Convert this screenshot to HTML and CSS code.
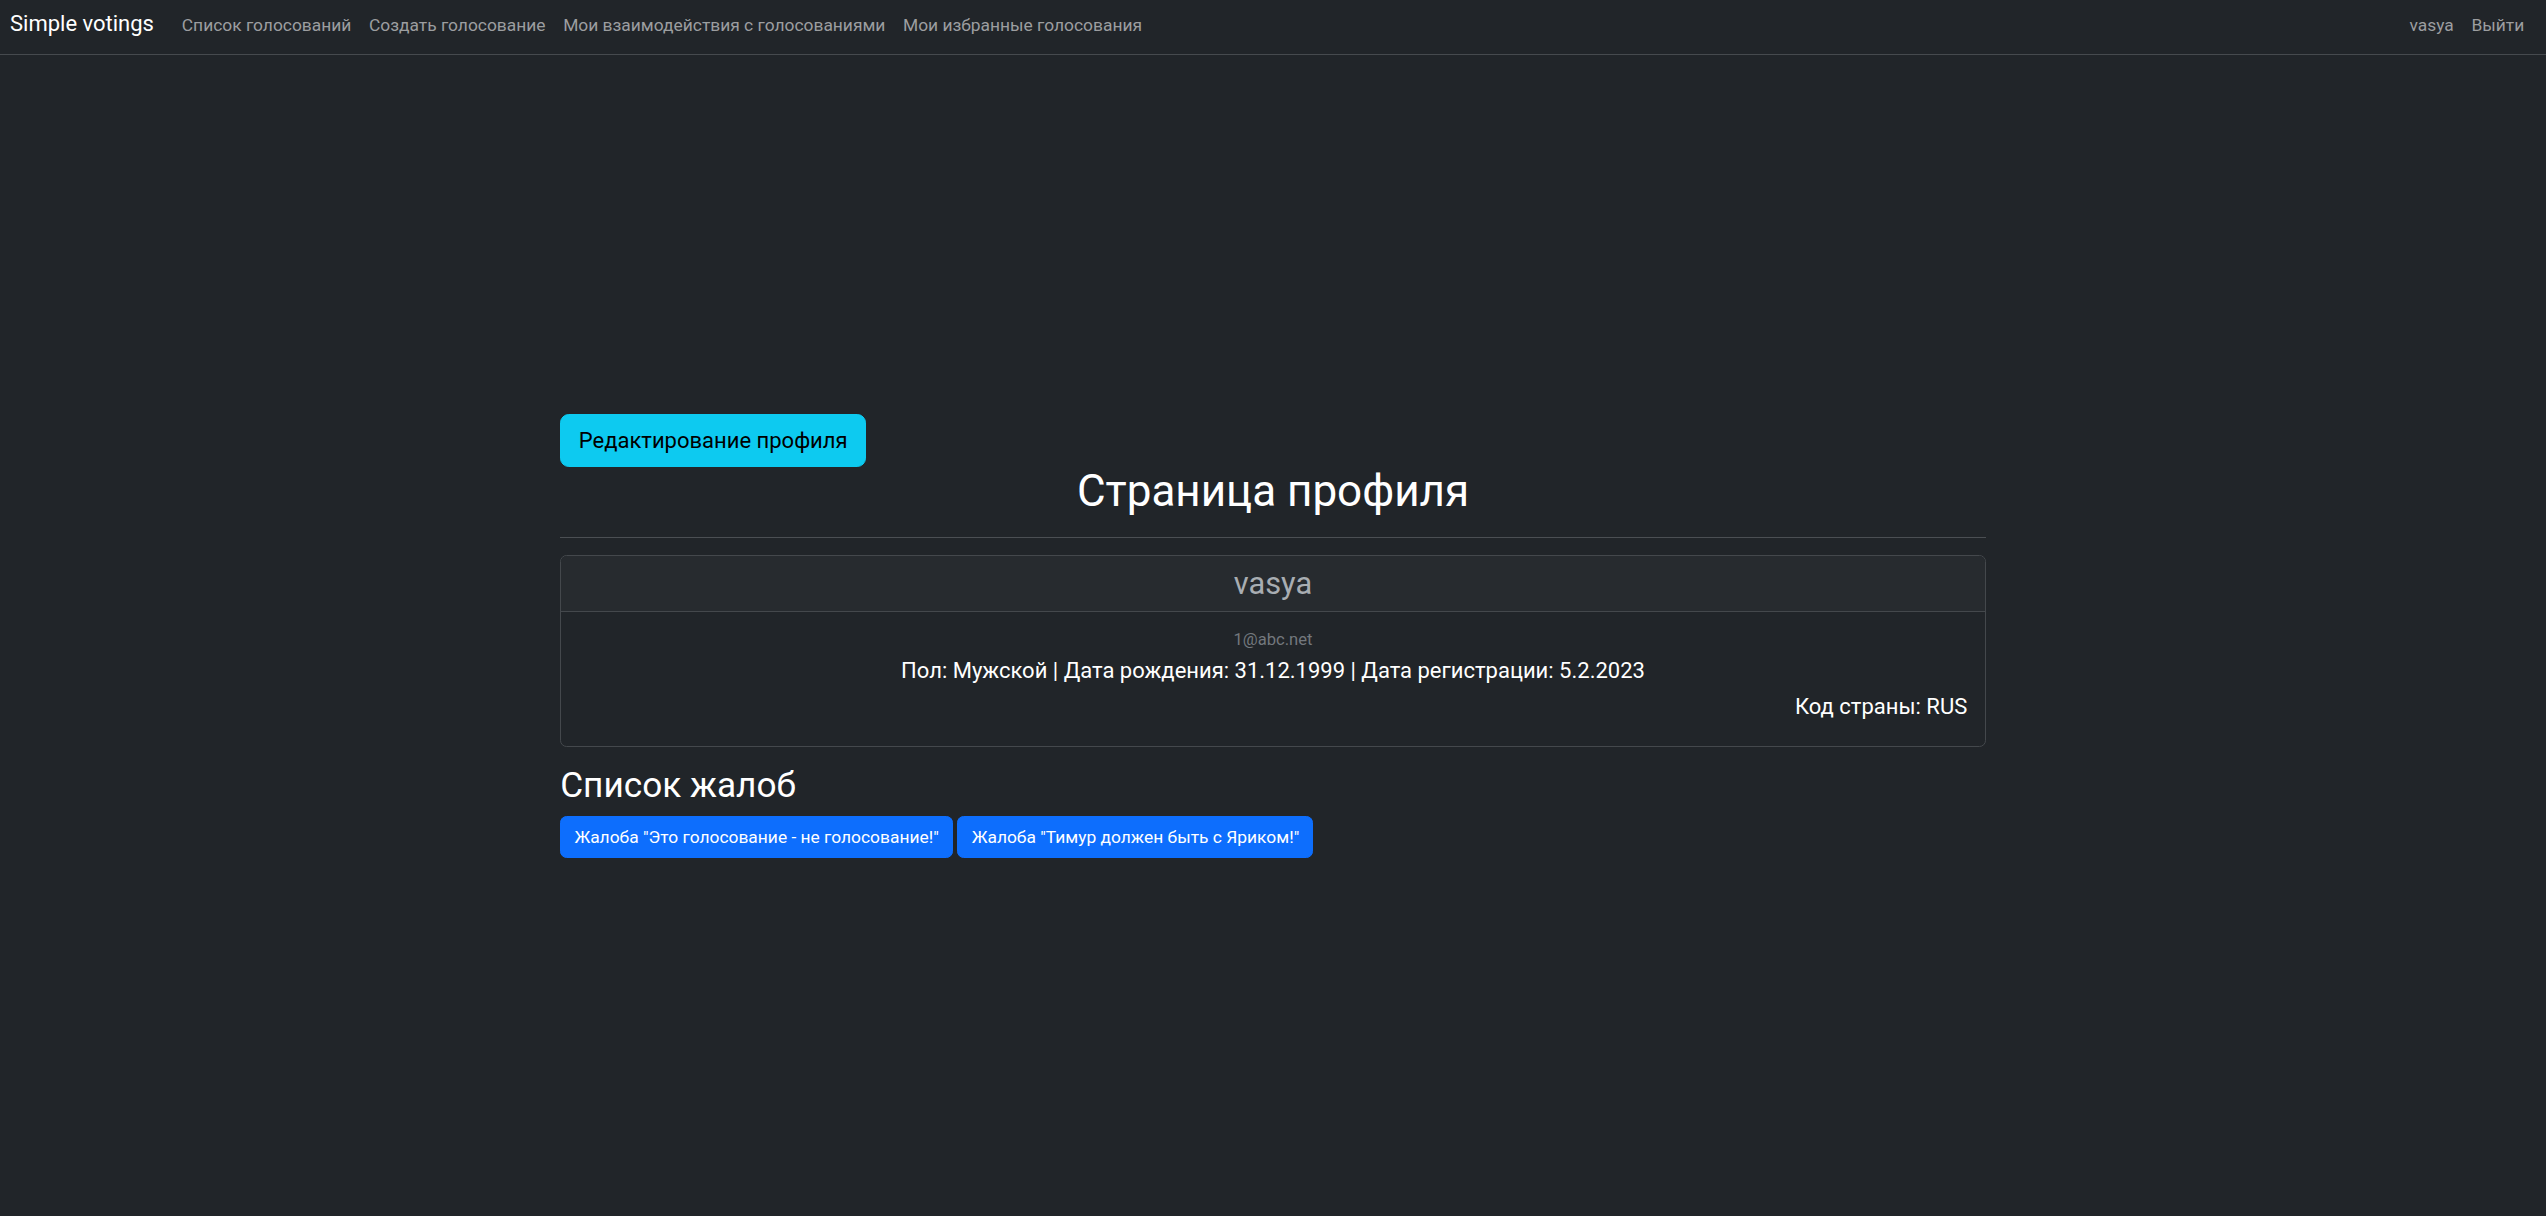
FILE: index.html
```html
<!DOCTYPE html>
<html lang="ru">
<head>
<meta charset="utf-8">
<title>Simple votings</title>
<link rel="stylesheet" href="styles.css">
</head>
<body>
<nav class="navbar">
  <a class="brand" href="#">Simple votings</a>
  <ul class="nav-list">
    <li><a class="nav-link" href="#">Список голосований</a></li>
    <li><a class="nav-link" href="#">Создать голосование</a></li>
    <li><a class="nav-link" href="#">Мои взаимодействия с голосованиями</a></li>
    <li><a class="nav-link" href="#">Мои избранные голосования</a></li>
  </ul>
  <ul class="nav-list nav-right">
    <li><a class="nav-link" href="#">vasya</a></li>
    <li><a class="nav-link" href="#">Выйти</a></li>
  </ul>
</nav>
<main class="container">
  <div class="toolbar"><a class="btn btn-info" href="#">Редактирование профиля</a></div>
  <h1 class="page-title">Страница профиля</h1>
  <hr class="divider">
  <section class="card">
    <div class="card-header"><h3 class="card-name">vasya</h3></div>
    <div class="card-body">
      <div class="email">1@abc.net</div>
      <p class="info center">Пол: Мужской | Дата рождения: 31.12.1999 | Дата регистрации: 5.2.2023</p>
      <p class="info end">Код страны: RUS</p>
    </div>
  </section>
  <h2 class="section-title">Список жалоб</h2>
  <div class="complaints">
    <a class="btn btn-primary" href="#">Жалоба "Это голосование - не голосование!"</a>
    <a class="btn btn-primary" href="#">Жалоба "Тимур должен быть с Яриком!"</a>
  </div>
</main>
</body>
</html>
```
FILE: styles.css
```css
* { box-sizing: border-box; }
html, body { margin: 0; padding: 0; }
body {
  background: #212529;
  color: #f8f9fa;
  font-family: Roboto, "Liberation Sans", sans-serif;
  font-size: 17.6px;
  line-height: 1.5;
  min-height: 1216px;
}
a { text-decoration: none; }

.navbar {
  display: flex;
  align-items: baseline;
  height: 55px;
  padding: 6.7px 13px 0 10px;
  border-bottom: 1px solid #464a4e;
}
.brand {
  color: #ffffff;
  font-size: 22px;
  line-height: 33px;
  margin-right: 19px;
}
.nav-list {
  display: flex;
  list-style: none;
  margin: 0;
  padding: 0;
}
.nav-right { margin-left: auto; }
.nav-link {
  display: block;
  color: #9c9ea0;
  font-size: 17.4px;
  line-height: 26.4px;
  padding: 0 8.8px;
}

.container {
  width: 1452px;
  margin: 0 auto;
  padding: 359px 13.2px 0;
}
.toolbar { display: flex; }
.btn {
  display: inline-block;
  border: 1px solid transparent;
  text-align: center;
  white-space: nowrap;
}
.btn-info {
  background: #0dcaf0;
  border-color: #0dcaf0;
  color: #000;
  font-size: 22px;
  line-height: 33px;
  padding: 8.8px 17.6px;
  border-radius: 8.8px;
}
.btn-primary {
  background: #0d6efd;
  border-color: #0d6efd;
  color: #fff;
  font-size: 17.4px;
  line-height: 26.4px;
  padding: 6.6px 13.2px;
  border-radius: 6.6px;
}

.page-title {
  margin: -2px 0 0;
  font-size: 44px;
  font-weight: 400;
  line-height: 52.8px;
  text-align: center;
  color: #ffffff;
}
.divider {
  margin: 19.6px 0 17px;
  border: 0;
  border-top: 1px solid #4b4f53;
}

.card {
  border: 1px solid #44484c;
  border-radius: 6.6px;
  margin-bottom: 17.4px;
  overflow: hidden;
}
.card-header {
  background: #272b2f;
  border-bottom: 1px solid #44484c;
  padding: 8.8px 17.6px;
}
.card-name {
  margin: 0;
  font-size: 30.8px;
  font-weight: 400;
  line-height: 37px;
  text-align: center;
  color: #a8adb2;
}
.card-body {
  padding: 17px 17.6px 23px;
}
.email {
  font-size: 16.6px;
  line-height: 21.6px;
  text-align: center;
  color: #73787d;
  margin-bottom: 3.4px;
}
.info {
  margin: 0;
  font-size: 22px;
  line-height: 33px;
  color: #ffffff;
}
.info.center { text-align: center; }
.info.end { text-align: right; margin-top: 3px; }

.section-title {
  margin: 0 0 10px;
  font-size: 35.2px;
  font-weight: 400;
  line-height: 42.2px;
  color: #ffffff;
}
.complaints {
  display: flex;
  gap: 4.5px;
}
```
